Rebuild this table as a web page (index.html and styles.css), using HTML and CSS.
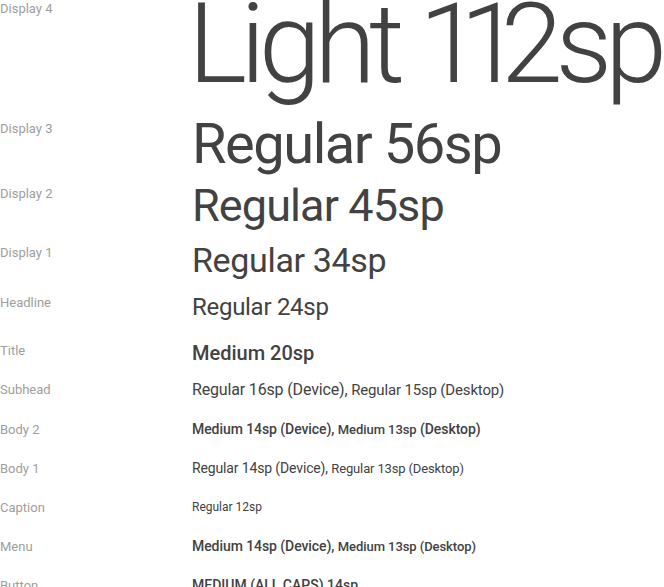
FILE: index.html
```html
<!DOCTYPE html>
<html lang="en">
<head>
    <meta charset="UTF-8">
    <meta name="viewport" content="width=device-width, initial-scale=1.0">
    <title>Typography styles</title>
    <link rel="stylesheet" href="styles.css">
</head>
<body>
    <div class="type-list">
        <div class="row display-4">
            <div class="label">Display 4</div>
            <div class="sample">Light <span class="size"><span class="ones">11</span>2sp</span></div>
        </div>
        <div class="row display-3">
            <div class="label">Display 3</div>
            <div class="sample">Regular 56sp</div>
        </div>
        <div class="row display-2">
            <div class="label">Display 2</div>
            <div class="sample">Regular 45sp</div>
        </div>
        <div class="row display-1">
            <div class="label">Display 1</div>
            <div class="sample">Regular 34sp</div>
        </div>
        <div class="row headline">
            <div class="label">Headline</div>
            <div class="sample">Regular 24sp</div>
        </div>
        <div class="row title">
            <div class="label">Title</div>
            <div class="sample">Medium 20sp</div>
        </div>
        <div class="row small subhead">
            <div class="label">Subhead</div>
            <div class="sample">Regular 16sp (Device), <span class="desktop">Regular 15sp (Desktop)</span></div>
        </div>
        <div class="row small body-2">
            <div class="label">Body 2</div>
            <div class="sample">Medium 14sp (Device), <span class="desktop">Medium 13sp</span> (Desktop)</div>
        </div>
        <div class="row small body-1">
            <div class="label">Body 1</div>
            <div class="sample">Regular 14sp (Device), <span class="desktop">Regular 13sp (Desktop)</span></div>
        </div>
        <div class="row small caption">
            <div class="label">Caption</div>
            <div class="sample">Regular 12sp</div>
        </div>
        <div class="row small menu">
            <div class="label">Menu</div>
            <div class="sample">Medium 14sp (Device), <span class="desktop">Medium 13sp (Desktop)</span></div>
        </div>
        <div class="row small button">
            <div class="label">Button</div>
            <div class="sample">MEDIUM (ALL CAPS) 14sp</div>
        </div>
    </div>
</body>
</html>
```

FILE: styles.css
```css
body {
    margin: 0;
    background: #fff;
    font-family: Roboto, "Liberation Sans", sans-serif;
    overflow: hidden;
}
.type-list {
    width: 664px;
}
.row {
    display: grid;
    grid-template-columns: 192px 1fr;
    align-items: start;
}
.label {
    font-size: 13px;
    line-height: 13px;
    color: #9e9e9e;
}
.sample {
    color: #424242;
    line-height: 1;
    white-space: nowrap;
}

/* big rows: label lines up with the cap top of the sample */
.display-4 .sample {
    margin-left: -4px;
    font-size: 112px;
    font-weight: 300;
    letter-spacing: -0.06em;
    line-height: 88px;
}
.display-4 .size {
    letter-spacing: -0.065em;
}
.display-4 .ones {
    letter-spacing: -0.19em; /* the original uses narrow ones */
}
.display-4 .label { margin-top: 2px; }

.display-3 { margin-top: 28px; }
.display-3 .sample {
    font-size: 56px;
    letter-spacing: -0.026em;
}
.display-3 .label { margin-top: 6px; }

.display-2 { margin-top: 11px; }
.display-2 .sample {
    font-size: 45px;
    letter-spacing: -0.02em;
}
.display-2 .label { margin-top: 4px; }

.display-1 { margin-top: 15px; }
.display-1 .sample {
    font-size: 34px;
    letter-spacing: -0.01em;
}
.display-1 .label { margin-top: 3px; }

.headline { margin-top: 18px; }
.headline .sample {
    font-size: 24px;
    letter-spacing: -0.012em;
}
.headline .label { margin-top: 1px; }

.title { margin-top: 24px; }
.title .sample {
    font-size: 20px;
    font-weight: 500;
}
.title .label { margin-top: 1px; }

/* small rows sit on a 39px pitch */
.small .label,
.small .sample {
    line-height: 39px;
}
.subhead { margin-top: 7px; }
.subhead .sample {
    font-size: 16px;
    letter-spacing: -0.01em;
}
.subhead .desktop { font-size: 15px; }

.body-2 .sample {
    font-size: 14px;
    font-weight: 500;
    letter-spacing: -0.005em;
}
.body-1 .sample {
    font-size: 14px;
    letter-spacing: -0.01em;
}
.body-2 .desktop,
.body-1 .desktop,
.menu .desktop {
    font-size: 13px;
}
.caption .sample {
    font-size: 12px;
}
.menu .sample {
    font-size: 14px;
    font-weight: 500;
    letter-spacing: -0.005em;
}
.button .sample {
    font-size: 14px;
    font-weight: 500;
}
```
